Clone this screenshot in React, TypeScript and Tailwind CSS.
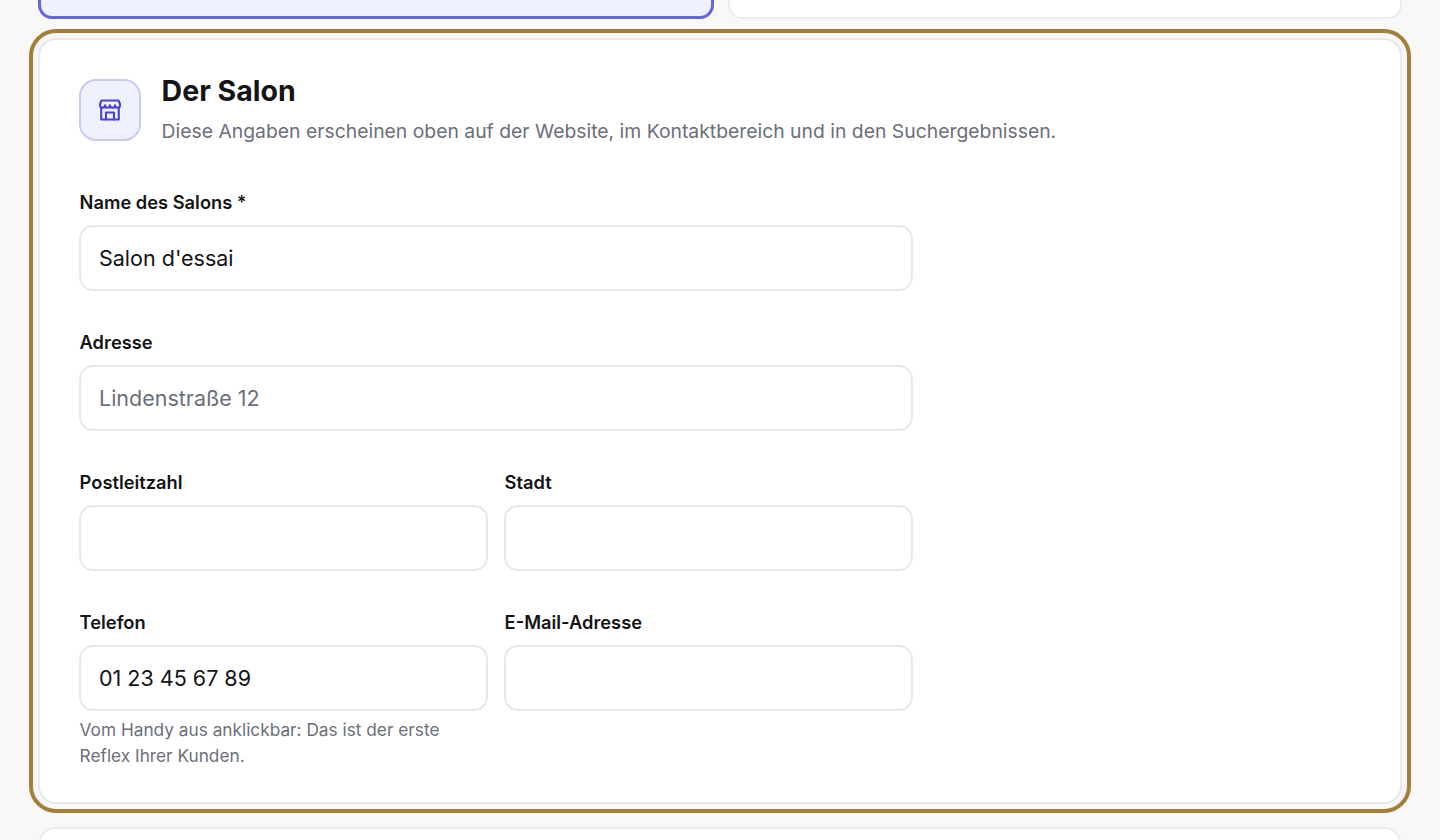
function StoreIcon() {
  return (
    <svg viewBox="0 0 24 24" fill="none" stroke="#4a42d8" strokeWidth="2.1" strokeLinejoin="round" strokeLinecap="round" className="h-[24px] w-[24px]">
      <path d="M3.5 2.5h17l1.5 3.5v1.2a2.5 2.5 0 0 1-5 0 2.5 2.5 0 0 1-5 0 2.5 2.5 0 0 1-5 0 2.5 2.5 0 0 1-5 0V6z" />
      <path d="M3.2 10v11.5h17.6V10" />
      <path d="M8 21.5v-7h8v7" />
    </svg>
  )
}

function Field({ label, value, placeholder, hint }: { label: string; value?: string; placeholder?: string; hint?: string }) {
  return (
    <div className="flex min-w-0 flex-col">
      <label className="mb-[10px] pl-[0.6px] text-[18.3px] leading-[26px] font-semibold text-[#141414]">{label}</label>
      <input
        readOnly
        value={value ?? ''}
        placeholder={placeholder}
        className="h-[66px] w-full rounded-[14px] border-2 border-[#e8e8ea] bg-white px-[18px] text-[21.5px] text-[#141414] outline-none placeholder:text-[#6b6f7b]"
      />
      {hint && <p className="mt-[6px] pl-[0.6px] text-[17.25px] leading-[26px] text-[#6b6f7b]">{hint}</p>}
    </div>
  )
}

export default function App() {
  return (
    <div className="h-[840px] overflow-hidden bg-[#f8f8f8] px-[38px] font-['Inter',sans-serif]">
      {/* previous row, scrolled mostly out of view */}
      <div className="-mt-[61px] grid h-[80px] grid-cols-[676px_1fr] gap-[14px]">
        <div className="rounded-[14px] border-[3px] border-[#6366e1] bg-[#eef2ff]" />
        <div className="rounded-[14px] border-2 border-[#ececee] bg-white" />
      </div>

      <section className="mt-[19px] rounded-[18px] border-2 border-[#e8e8ec] bg-white px-[39px] pt-[39px] pb-[32.5px] outline-4 outline-offset-[5px] outline-[#a67c3a]">
        <div className="flex gap-[20.6px]">
          <div className="flex h-[62px] w-[62px] shrink-0 items-center justify-center rounded-[17px] border-2 border-[#c9caf6] bg-[#eef2ff]">
            <StoreIcon />
          </div>
          <div>
            <h2 className="-mt-[1px] text-[28.5px] leading-[26px] font-bold text-[#141414]">Der Salon</h2>
            <p className="mt-[13px] text-[19.35px] leading-[28px] text-[#6b6f7b]">
              Diese Angaben erscheinen oben auf der Website, im Kontaktbereich und in den Suchergebnissen.
            </p>
          </div>
        </div>

        <div className="mt-[44px] flex w-[834px] flex-col gap-[38px]">
          <Field label="Name des Salons *" value="Salon d'essai" />
          <Field label="Adresse" placeholder="Lindenstraße 12" />
          <div className="grid grid-cols-2 gap-[16px]">
            <Field label="Postleitzahl" />
            <Field label="Stadt" />
          </div>
          <div className="grid grid-cols-2 gap-[16px]">
            <Field label="Telefon" value="01 23 45 67 89" hint="Vom Handy aus anklickbar: Das ist der erste Reflex Ihrer Kunden." />
            <Field label="E-Mail-Adresse" />
          </div>
        </div>
      </section>

      <div className="mt-[23px] h-[60px] rounded-[18px] border-2 border-[#ececee] bg-white" />
    </div>
  )
}
